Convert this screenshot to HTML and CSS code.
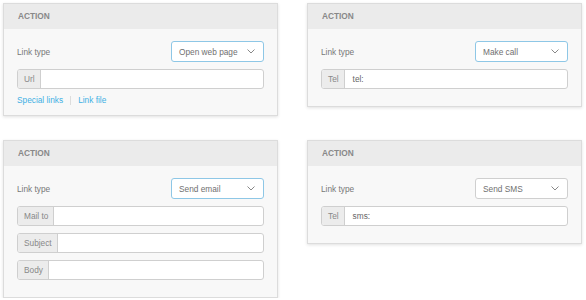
FILE: index.html
```html
<!DOCTYPE html>
<html lang="en">
<head>
    <meta charset="UTF-8">
    <title>Link actions</title>
    <link rel="stylesheet" href="styles.css">
</head>
<body>
    <div class="grid">
        <div class="panel">
            <div class="panel-header">Action</div>
            <div class="panel-body">
                <div class="row">
                    <span class="label">Link type</span>
                    <div class="select active">Open web page
                        <svg class="chevron" width="8" height="5" viewBox="0 0 8 5"><polyline points="0.5,0.5 4,4 7.5,0.5"/></svg>
                    </div>
                </div>
                <div class="input-group">
                    <span class="addon">Url</span>
                    <span class="input"></span>
                </div>
                <div class="links">
                    <a href="#">Special links</a>
                    <span class="sep"></span>
                    <a href="#">Link file</a>
                </div>
            </div>
        </div>

        <div class="panel">
            <div class="panel-header">Action</div>
            <div class="panel-body">
                <div class="row">
                    <span class="label">Link type</span>
                    <div class="select active">Make call
                        <svg class="chevron" width="8" height="5" viewBox="0 0 8 5"><polyline points="0.5,0.5 4,4 7.5,0.5"/></svg>
                    </div>
                </div>
                <div class="input-group">
                    <span class="addon">Tel</span>
                    <span class="input">tel:</span>
                </div>
            </div>
        </div>

        <div class="panel">
            <div class="panel-header">Action</div>
            <div class="panel-body">
                <div class="row">
                    <span class="label">Link type</span>
                    <div class="select active">Send email
                        <svg class="chevron" width="8" height="5" viewBox="0 0 8 5"><polyline points="0.5,0.5 4,4 7.5,0.5"/></svg>
                    </div>
                </div>
                <div class="input-group">
                    <span class="addon">Mail to</span>
                    <span class="input"></span>
                </div>
                <div class="input-group">
                    <span class="addon">Subject</span>
                    <span class="input"></span>
                </div>
                <div class="input-group">
                    <span class="addon">Body</span>
                    <span class="input"></span>
                </div>
            </div>
        </div>

        <div class="panel">
            <div class="panel-header">Action</div>
            <div class="panel-body">
                <div class="row">
                    <span class="label">Link type</span>
                    <div class="select">Send SMS
                        <svg class="chevron" width="8" height="5" viewBox="0 0 8 5"><polyline points="0.5,0.5 4,4 7.5,0.5"/></svg>
                    </div>
                </div>
                <div class="input-group">
                    <span class="addon">Tel</span>
                    <span class="input">sms:</span>
                </div>
            </div>
        </div>
    </div>
</body>
</html>
```

FILE: styles.css
```css
body {
    margin: 0;
    padding: 3px 0 0 3px;
    background-color: #ffffff;
    font-family: 'Liberation Sans', Arial, sans-serif;
    font-size: 8.3px;
    color: #666;
}

.grid {
    display: grid;
    grid-template-columns: 275px 275px;
    column-gap: 29px;
    row-gap: 24px;
    align-items: start;
}

.panel {
    background-color: #f8f8f8;
    border: 1px solid #dcdcdc;
    box-shadow: 0 1px 3px rgba(0, 0, 0, 0.12);
}

.panel-header {
    height: 25px;
    line-height: 25px;
    padding-left: 14px;
    background-color: #ebebeb;
    color: #888;
    font-weight: bold;
    text-transform: uppercase;
}

.panel-body {
    padding: 12px 13px 10px 13px;
}

.row {
    display: flex;
    justify-content: space-between;
    align-items: center;
    margin-bottom: 7px;
}

.label {
    color: #777;
}

.select {
    box-sizing: border-box;
    width: 93px;
    height: 21px;
    padding: 0 8px 0 7px;
    display: flex;
    align-items: center;
    justify-content: space-between;
    background-color: #fff;
    border: 1px solid #cfcfcf;
    border-radius: 3px;
    color: #707070;
}

.select.active {
    border-color: #8ec7e6;
}

.chevron {
    fill: none;
    stroke: #888;
    stroke-width: 1;
}

.input-group {
    box-sizing: border-box;
    display: flex;
    height: 20px;
    margin-bottom: 7px;
    background-color: #fff;
    border: 1px solid #cfcfcf;
    border-radius: 3px;
    overflow: hidden;
}

.addon {
    display: flex;
    align-items: center;
    padding: 0 5px 0 6px;
    background-color: #ececec;
    border-right: 1px solid #cfcfcf;
    color: #888;
}

.input {
    flex: 1;
    display: flex;
    align-items: center;
    padding-left: 8px;
    color: #666;
}

.links {
    display: flex;
    align-items: center;
    height: 9px;
    line-height: 9px;
}

.links a {
    color: #3fb0e4;
    text-decoration: none;
}

.sep {
    width: 1px;
    height: 9px;
    margin: 0 7px;
    background-color: #ddd;
}
```
